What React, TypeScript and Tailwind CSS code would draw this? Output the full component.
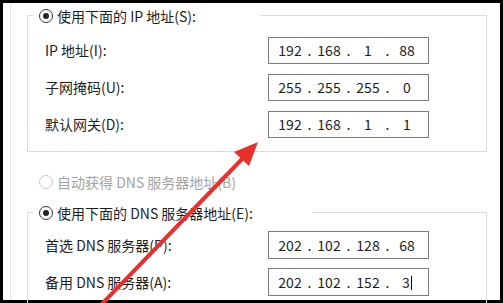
const FONT = { fontFamily: '"Noto Sans CJK SC", "Noto Sans", sans-serif' };

const Radio = ({ checked, disabled }: { checked?: boolean; disabled?: boolean }) => (
  <span
    className={`flex h-[14px] w-[14px] shrink-0 items-center justify-center rounded-full border bg-white ${
      disabled ? "border-[#c9c9c9]" : "border-[#333333]"
    }`}
  >
    {checked && <span className="h-[6px] w-[6px] rounded-full bg-[#222222]" />}
  </span>
);

const IpBox = ({ parts, cursor = false }: { parts: string[]; cursor?: boolean }) => (
  <div className="flex h-full w-[161px] items-center border border-[#7b7b7b] bg-white pl-[5px] text-[14px] text-[#1c1c1c]">
    {parts.map((p, i) => (
      <div key={i} className="flex items-center">
        <span className="w-[32px] text-center">
          {p}
          {cursor && i === parts.length - 1 && (
            <span className="ml-[1px] inline-block h-[14px] w-[1px] bg-black align-[-2px]" />
          )}
        </span>
        {i < parts.length - 1 && <span className="w-[7px] text-center">.</span>}
      </div>
    ))}
  </div>
);

interface RowProps {
  label: string;
  parts: string[];
  cursor?: boolean;
  tall?: boolean;
}

const Row = ({ label, parts, cursor, tall }: RowProps) => (
  <div className={`flex items-center pl-[17px] ${tall ? "h-[28px]" : "h-[27px]"}`}>
    <span className="w-[223px] text-[14px] text-[#1e1e1e]">{label}</span>
    <IpBox parts={parts} cursor={cursor} />
  </div>
);

const GroupTitle = ({ text, width }: { text: string; width: string }) => (
  <div className={`-mt-[9px] ml-[5px] flex h-[18px] items-center gap-[4px] bg-white pl-[6px] ${width}`}>
    <Radio checked />
    <span className="whitespace-nowrap text-[14px] text-[#1e1e1e]">{text}</span>
  </div>
);

export default function App() {
  return (
    <div
      className="relative flex h-[303px] w-[503px] flex-col overflow-hidden bg-black px-[3px] pt-[3px]"
      style={FONT}
    >
      <div className="flex h-[297px] w-[497px] shrink-0 flex-col bg-white pl-[7px]">
        <div className="flex h-full flex-col border-l border-[#e4e4e4] pl-[16px] pr-[13px]">
          {/* IP group */}
          <div className="mt-[12px] flex flex-col border border-[#dcdcdc] pb-[13px]">
            <GroupTitle text="使用下面的 IP 地址(S):" width="w-[227px]" />
            <div className="mt-[12px] flex flex-col gap-[10px]">
              <Row label="IP 地址(I):" parts={["192", "168", "1", "88"]} />
              <Row label="子网掩码(U):" parts={["255", "255", "255", "0"]} />
              <Row label="默认网关(D):" parts={["192", "168", "1", "1"]} />
            </div>
          </div>

          {/* auto DNS (disabled) */}
          <div className="ml-[12px] mt-[21px] flex h-[18px] shrink-0 items-center gap-[4px]">
            <Radio disabled />
            <span className="whitespace-nowrap text-[14px] text-[#a3a3a3]">自动获得 DNS 服务器地址(B)</span>
          </div>

          {/* DNS group */}
          <div className="mt-[21px] flex h-[120px] shrink-0 flex-col border border-[#dcdcdc]">
            <GroupTitle text="使用下面的 DNS 服务器地址(E):" width="w-[279px]" />
            <div className="mt-[9px] flex flex-col gap-[9px]">
              <Row label="首选 DNS 服务器(P):" parts={["202", "102", "128", "68"]} tall />
              <Row label="备用 DNS 服务器(A):" parts={["202", "102", "152", "3"]} cursor tall />
            </div>
          </div>
        </div>
      </div>

      {/* red annotation arrow */}
      <svg className="pointer-events-none absolute inset-0" width="503" height="303" viewBox="0 0 503 303">
        <line x1="100" y1="306" x2="244" y2="157" stroke="#e8302c" strokeWidth="4" strokeLinecap="round" />
        <polygon points="258,142 234,152 249,166" fill="#e8302c" />
      </svg>
    </div>
  );
}
